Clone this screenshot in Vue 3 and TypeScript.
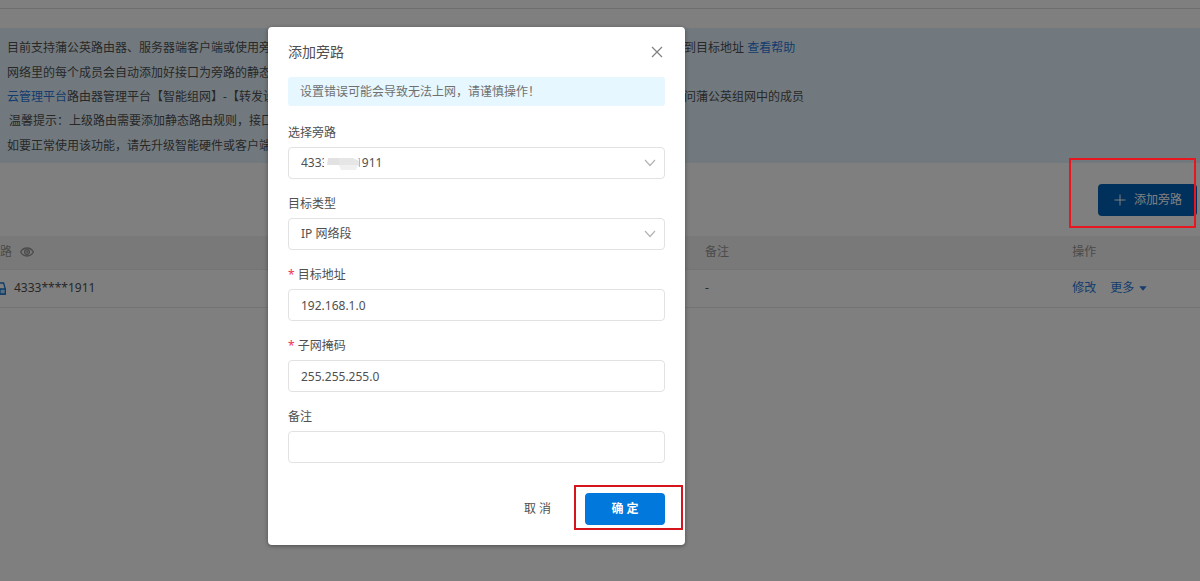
<script setup lang="ts">
import { ref } from 'vue'

const member = ref('4333****1911')
const targetType = ref('IP 网络段')
const address = ref('192.168.1.0')
const mask = ref('255.255.255.0')
const remark = ref('')
</script>

<template>
  <div class="page">
    <header class="topbar"></header>
    <main>
      <section class="notice">
        <p><span class="lead">目前支持蒲公英路由器、服务器端客户端或使用旁</span><span>到目标地址 <a href="#">查看帮助</a></span></p>
        <p><span class="lead">网络里的每个成员会自动添加好接口为旁路的静态</span></p>
        <p><span class="lead"><a href="#">云管理平台</a>路由器管理平台【智能组网】-【转发设</span><span>问蒲公英组网中的成员</span></p>
        <p><span class="lead indent">温馨提示：上级路由需要添加静态路由规则，接口</span></p>
        <p><span class="lead">如要正常使用该功能，请先升级智能硬件或客户端</span></p>
      </section>

      <div class="toolbar">
        <button class="add" type="button">
          <svg width="12" height="12" viewBox="0 0 12 12" fill="none" stroke="currentColor"><path d="M6 .5v11M.5 6h11" /></svg>
          <span>添加旁路</span>
        </button>
      </div>

      <table class="list">
        <thead>
          <tr>
            <th class="c-member">
              <span class="cell">路
                <svg class="eye" width="14" height="10" viewBox="0 0 14 10" fill="none" stroke="currentColor" stroke-width="1.300">
                  <path d="M.6 5C2 2.400 4.300 1 7 1s5 1.400 6.400 4C12 7.600 9.700 9 7 9S2 7.600.6 5z" />
                  <circle cx="7" cy="5" r="2.400" />
                  <path d="M7 3.800V5h1.200" />
                </svg>
              </span>
            </th>
            <th class="c-remark">备注</th>
            <th>操作</th>
          </tr>
        </thead>
        <tbody>
          <tr>
            <td>
              <span class="cell member">
                <svg width="6" height="13" viewBox="0 0 6 13" fill="none" stroke="#1c7ad2" stroke-width="1.300">
                  <path d="M0 1h3.600l1.700 6v5H0" />
                  <path d="M0 7h5.300v5H0z" fill="#b5dcff" />
                </svg>
                4333****1911
              </span>
            </td>
            <td>-</td>
            <td>
              <span class="cell actions">
                <a href="#">修改</a>
                <a href="#" class="more">更多
                  <svg width="8" height="5" viewBox="0 0 8 5"><path d="M.3.2h7.400L4 4.800z" fill="currentColor" /></svg>
                </a>
              </span>
            </td>
          </tr>
        </tbody>
      </table>
    </main>

    <div class="overlay">
      <form class="dialog" role="dialog" aria-labelledby="dialog-title" @submit.prevent>
        <div class="head">
          <h2 id="dialog-title">添加旁路</h2>
          <button class="close" type="button" aria-label="关闭">
            <svg width="12" height="12" viewBox="0 0 12 12" fill="none" stroke="currentColor" stroke-width="1.200"><path d="M1 1l10 10M11 1L1 11" /></svg>
          </button>
        </div>
        <div class="alert">设置错误可能会导致无法上网，请谨慎操作！</div>

        <div class="field">
          <label for="member">选择旁路</label>
          <div class="control">
            <select id="member" v-model="member"><option>4333****1911</option></select>
            <svg class="smudge" width="38" height="16" viewBox="0 0 38 16">
              <path d="M0 1h33l2 3v12H6l-6-2z" fill="#fff" />
              <path d="M4 3h13v7H3z" fill="#e2e2e2" />
              <path d="M15 3h14l6 3v5H15z" fill="#e6e6e6" />
              <path d="M15 10h19l-2 5H17z" fill="#f0f0f0" />
            </svg>
            <svg class="chevron" width="12" height="8" viewBox="0 0 12 8" fill="none" stroke="currentColor" stroke-width="1.200"><path d="M1 1l5 5.500L11 1" /></svg>
          </div>
        </div>
        <div class="field">
          <label for="type">目标类型</label>
          <div class="control">
            <select id="type" v-model="targetType"><option>IP 网络段</option></select>
            <svg class="chevron" width="12" height="8" viewBox="0 0 12 8" fill="none" stroke="currentColor" stroke-width="1.200"><path d="M1 1l5 5.500L11 1" /></svg>
          </div>
        </div>
        <div class="field">
          <label for="address" class="required">目标地址</label>
          <input id="address" v-model="address" type="text" />
        </div>
        <div class="field">
          <label for="mask" class="required">子网掩码</label>
          <input id="mask" v-model="mask" type="text" />
        </div>
        <div class="field">
          <label for="remark">备注</label>
          <input id="remark" v-model="remark" type="text" />
        </div>

        <div class="foot">
          <button class="cancel" type="button">取 消</button>
          <div class="confirm-wrap">
            <button class="confirm" type="submit">确 定</button>
            <i class="marker"></i>
          </div>
        </div>
      </form>
    </div>
    <i class="marker add-marker"></i>
  </div>
</template>

<style>
body {
  background: #fff;
}
</style>

<style scoped>
.page {
  position: relative;
  min-height: 100vh;
  overflow: hidden;
  font: 12px/20px "Noto Sans", "Noto Sans CJK SC", sans-serif;
  color: #505050;
}
* {
  box-sizing: border-box;
}
button,
input,
select {
  font: inherit;
  color: inherit;
}
a {
  color: #2878dc;
  text-decoration: none;
}
.topbar {
  height: 9px;
  border-bottom: 1px solid #dcdcdc;
}
.notice {
  display: grid;
  min-height: 135px;
  margin-top: 19px;
  padding: 8px 7px 5px;
  background: #e4f3fc;
}
.notice p {
  display: flex;
  align-items: center;
  margin: 0;
  white-space: nowrap;
}
.lead {
  flex: 0 0 677px;
}
.indent {
  padding-left: 2px;
}
.toolbar {
  display: flex;
  justify-content: flex-end;
  padding: 21px 3px 20px;
}
.add {
  display: flex;
  align-items: center;
  gap: 8px;
  height: 32px;
  padding: 0 15px 0 16px;
  border: 0;
  border-radius: 4px;
  background: #0060b8;
  color: #fff;
}
.list {
  width: 100%;
  border-collapse: collapse;
  table-layout: fixed;
}
.list th {
  height: 33px;
  padding: 0;
  background: #f3f3f3;
  border-bottom: 1px solid #e8e8e8;
  color: #969696;
  font-weight: 400;
  text-align: left;
}
.list td {
  height: 38px;
  padding: 0;
  border-bottom: 1px solid #e8e8e8;
}
.c-member {
  width: 58.75%;
}
.c-remark {
  width: 30.6%;
}
.cell {
  display: flex;
  align-items: center;
  gap: 8px;
}
.actions {
  gap: 14px;
}
.more {
  display: flex;
  align-items: center;
  gap: 5px;
}
.overlay {
  position: absolute;
  inset: 0;
  padding: 27px 0 0 268px;
  background: rgba(0, 0, 0, 0.5);
}
.dialog {
  width: 417px;
  padding: 15px 20px 20px;
  border-radius: 4px;
  background: #fff;
  box-shadow: 0 1px 4px rgba(0, 0, 0, 0.4);
}
.head {
  display: flex;
  align-items: center;
  justify-content: space-between;
  height: 20px;
}
h2 {
  margin: 0;
  font-size: 14px;
  font-weight: 400;
}
.close {
  display: flex;
  padding: 2px;
  border: 0;
  background: none;
  color: #808080;
}
.alert {
  margin: 15px 0 16px;
  padding: 4px 12px;
  border-radius: 3px;
  background: #e6f7ff;
  line-height: 21px;
  color: #707070;
}
.field {
  margin-bottom: 14px;
}
.field label {
  display: block;
  height: 25px;
  line-height: 22px;
}
.required::before {
  content: "*";
  margin-right: 3px;
  color: #f0325a;
}
.control {
  position: relative;
}
.field input,
.field select {
  display: block;
  width: 100%;
  height: 32px;
  padding: 0 12px;
  border: 1px solid #e2e2e2;
  border-radius: 4px;
  background: #fff;
  outline: 0;
  appearance: none;
}
.chevron {
  position: absolute;
  top: 12px;
  right: 9px;
  color: #b4b4b4;
  pointer-events: none;
}
.smudge {
  position: absolute;
  top: 8px;
  left: 36px;
  pointer-events: none;
}
.foot {
  display: flex;
  justify-content: flex-end;
  gap: 22px;
  padding-top: 16px;
}
.cancel,
.confirm {
  height: 32px;
  border: 0;
  border-radius: 4px;
}
.cancel {
  padding: 0 12px;
  background: none;
}
.confirm {
  width: 80px;
  background: #0078dc;
  color: #fff;
  font-weight: 700;
}
.confirm-wrap {
  position: relative;
}
.marker {
  position: absolute;
  inset: -8px -18px -5px -11px;
  border: 2px solid #d4161c;
  pointer-events: none;
}
.add-marker {
  inset: 158px 4px auto auto;
  width: 127px;
  height: 70px;
  border-color: #e8161e;
}
</style>
